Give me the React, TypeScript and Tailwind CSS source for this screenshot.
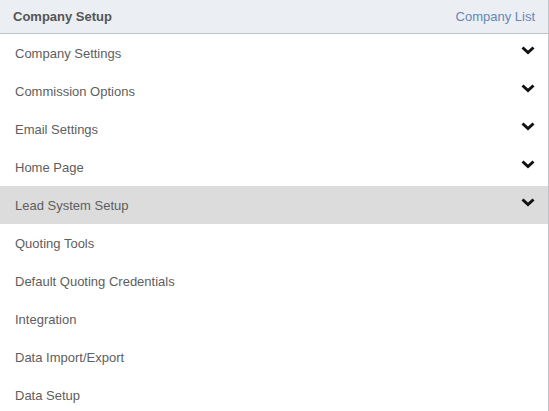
const sections = [
  { label: 'Company Settings', expandable: true },
  { label: 'Commission Options', expandable: true },
  { label: 'Email Settings', expandable: true },
  { label: 'Home Page', expandable: true },
  { label: 'Lead System Setup', expandable: true, active: true },
  { label: 'Quoting Tools' },
  { label: 'Default Quoting Credentials' },
  { label: 'Integration' },
  { label: 'Data Import/Export' },
  { label: 'Data Setup' },
];

function Chevron() {
  return (
    <svg width="14" height="9" viewBox="0 0 14 9" className="shrink-0 mb-[5px]">
      <path d="M1.5 1.5 L7 6.5 L12.5 1.5" fill="none" stroke="#111" strokeWidth="3" strokeLinejoin="miter" />
    </svg>
  );
}

export default function App() {
  return (
    <div className="w-[549px] h-[411px] bg-white overflow-hidden font-['Liberation_Sans',Arial,sans-serif]">
      <div className="w-[549px] h-full border-r border-[#b9c4cc] flex flex-col">
        <div className="h-[34px] shrink-0 flex items-center justify-between pl-[13px] pr-[13px] bg-[#ebeef2] border-b border-[#b9c4cc]">
          <span className="text-[13px] font-bold text-[#555]">Company Setup</span>
          <a href="#" className="text-[13px] text-[#6787b7]">Company List</a>
        </div>
        {sections.map((s) => (
          <div
            key={s.label}
            className={`h-[38px] shrink-0 flex items-center justify-between pl-[15px] pr-[13px] ${s.active ? 'bg-[#dcdcdc]' : ''}`}
          >
            <span className="text-[13px] text-[#5e5e5e] pt-[2px]">{s.label}</span>
            {s.expandable && <Chevron />}
          </div>
        ))}
      </div>
    </div>
  );
}
